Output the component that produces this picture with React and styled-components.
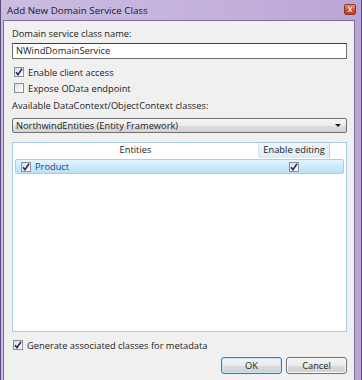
import React, {useState} from "react";
import styled, {createGlobalStyle} from "styled-components";

const GlobalStyle = createGlobalStyle`
  html, body {
    margin: 0;
    padding: 0;
    width: 362px;
    height: 380px;
    overflow: hidden;
    background: #ffffff;
  }
  * {
    box-sizing: border-box;
  }
`

const Window = styled.div`
  width: 362px;
  height: 380px;
  display: flex;
  flex-direction: column;
  background: linear-gradient(90deg, #cbbce2 0%, #c3b1dc 60%, #bba5d6 100%);
  border-left: 1px solid #5b4a7c;
  border-right: 1px solid #5b4a7c;
  padding: 0 6px 0 2px;
  font-family: "Open Sans", "Noto Sans", sans-serif;
  color: #1b1b1b;
`

const TitleBar = styled.div`
  height: 20px;
  display: flex;
  align-items: center;
  justify-content: space-between;
  padding: 0 0 0 4px;
  font-size: 9.8px;
`

const CloseButton = styled.div`
  width: 12px;
  height: 11px;
  margin-top: -2px;
  margin-right: -1px;
  border-radius: 2px;
  border: 1px solid #8a3a2a;
  background: linear-gradient(180deg, #e8977c 0%, #d4502f 55%, #c23a1d 100%);
  display: flex;
  align-items: center;
  justify-content: center;
  color: #f4dcd4;
  font-size: 8px;
  font-weight: 700;
  line-height: 1;
`

const Panel = styled.div`
  flex: 1;
  display: flex;
  flex-direction: column;
  background: #f0f0f0;
  border: 1px solid #7d6f94;
  border-bottom: none;
  padding: 6px 7px 0 8px;
  font-size: 9.3px;
`

const Label = styled.div`
  height: 13px;
  line-height: 13px;
  margin-top: ${p => p.$top || 0}px;
`

const TextBox = styled.div`
  height: 16px;
  margin-top: 3px;
  border: 1px solid #6f6f6f;
  border-top-color: #3f3f3f;
  background: #ffffff;
  padding: 0 3px;
  line-height: 14px;
`

const CheckRow = styled.label`
  display: flex;
  align-items: center;
  gap: 4px;
  height: 14px;
  margin-top: ${p => p.$top || 0}px;
  padding-left: ${p => p.$indent || 0}px;
`

const Box = styled.span`
  width: 10px;
  height: 10px;
  flex: none;
  border: 1px solid #8e8f8f;
  background: linear-gradient(135deg, #dcdcdc 0%, #f6f6f6 70%, #ffffff 100%);
  display: flex;
  align-items: center;
  justify-content: center;
  svg {
    display: block;
  }
`

const Select = styled.div`
  height: 15px;
  margin-top: 6px;
  border: 1px solid #707070;
  border-radius: 2px;
  background: linear-gradient(180deg, #f4f4f4 0%, #ebebeb 50%, #dddddd 51%, #d3d3d3 100%);
  display: flex;
  align-items: center;
  justify-content: space-between;
  padding: 0 5px 0 3px;
  line-height: 13px;
`

const Arrow = styled.span`
  width: 0;
  height: 0;
  border-left: 3px solid transparent;
  border-right: 3px solid transparent;
  border-top: 3px solid #1b1b1b;
`

const Grid = styled.div`
  height: 190px;
  margin-top: 9px;
  background: #ffffff;
  border: 1px solid #a9cbe2;
  display: flex;
  flex-direction: column;
`

const Columns = styled.div`
  display: grid;
  grid-template-columns: 1fr 72px 16px;
  align-items: center;
`

const HeaderRow = styled(Columns)`
  height: 15px;
`

const HeaderCell = styled.div`
  height: 15px;
  line-height: 14px;
  text-align: center;
  white-space: nowrap;
  background: ${p => p.$active ? "linear-gradient(180deg, #eef7fd 0%, #d9edfa 100%)" : "#ffffff"};
  border-right: ${p => p.$active ? "1px solid #b7d6ea" : "none"};
  border-left: ${p => p.$active ? "1px solid #d5e8f5" : "none"};
`

const DataRow = styled(Columns)`
  height: 15px;
  margin: 1px 2px 0 2px;
  grid-template-columns: 1fr 72px 14px;
  border: 1px solid #9ad3f3;
  border-radius: 2px;
  background: linear-gradient(180deg, #e6f5fe 0%, #cdeafc 50%, #b9e1fa 100%);
`

const NameCell = styled.div`
  display: flex;
  align-items: center;
  gap: 4px;
  padding-left: 5px;
  color: #1e3c7a;
  line-height: 13px;
`

const CenterCell = styled.div`
  display: flex;
  justify-content: center;
  padding-left: 2px;
`

const Footer = styled.div`
  display: flex;
  justify-content: flex-end;
  gap: 4px;
  margin-top: 5px;
`

const Button = styled.button`
  width: 61px;
  height: 17px;
  padding: 0;
  font-family: inherit;
  font-size: 9.3px;
  color: #1b1b1b;
  border-radius: 3px;
  border: 1px solid ${p => p.$primary ? "#3d7bad" : "#707070"};
  box-shadow: inset 0 0 0 1px ${p => p.$primary ? "#c3e5f7" : "#fbfbfb"};
  background: linear-gradient(180deg, #f3f3f3 0%, #ebebeb 50%, #dcdcdc 51%, #d0d0d0 100%);
`

const Check = () => (
  <svg width="8" height="8" viewBox="0 0 8 8">
    <path d="M1 4.2 L3 6.6 L7 0.8" fill="none" stroke="#1d2a7a" strokeWidth="1.6" />
  </svg>
)

const CheckBox = ({checked}) => (
  <Box>{checked && <Check />}</Box>
)

const App = () => {
  const [name] = useState("NWindDomainService");

  return (
    <>
      <GlobalStyle />
      <Window>
        <TitleBar>
          <span>Add New Domain Service Class</span>
          <CloseButton>x</CloseButton>
        </TitleBar>
        <Panel>
          <Label>Domain service class name:</Label>
          <TextBox>{name}</TextBox>
          <CheckRow $top={6} $indent={2}>
            <CheckBox checked />
            Enable client access
          </CheckRow>
          <CheckRow $top={2} $indent={2}>
            <CheckBox />
            Expose OData endpoint
          </CheckRow>
          <Label $top={4}>Available DataContext/ObjectContext classes:</Label>
          <Select>
            <span>NorthwindEntities (Entity Framework)</span>
            <Arrow />
          </Select>
          <Grid>
            <HeaderRow>
              <HeaderCell>Entities</HeaderCell>
              <HeaderCell $active>Enable editing</HeaderCell>
              <span />
            </HeaderRow>
            <DataRow>
              <NameCell>
                <CheckBox checked />
                Product
              </NameCell>
              <CenterCell>
                <CheckBox checked />
              </CenterCell>
              <span />
            </DataRow>
          </Grid>
          <CheckRow $top={6} $indent={1}>
            <CheckBox checked />
            Generate associated classes for metadata
          </CheckRow>
          <Footer>
            <Button $primary>OK</Button>
            <Button>Cancel</Button>
          </Footer>
        </Panel>
      </Window>
    </>
  );
};

export default App;
